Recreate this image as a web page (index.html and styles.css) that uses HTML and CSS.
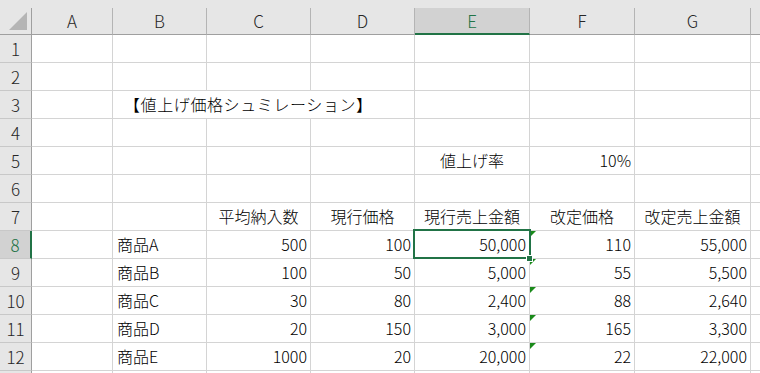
FILE: index.html
```html
<!DOCTYPE html>
<html lang="ja">
<head>
    <meta charset="UTF-8">
    <title>値上げ価格シュミレーション</title>
    <link rel="stylesheet" href="styles.css">
</head>
<body>
<div class="sheet">
    <div class="strip"></div>
    <div class="grid">
        <!-- 列見出し -->
        <div class="corner">
            <svg width="31" height="26" viewBox="0 0 31 26"><polygon points="27,4 27,22 9,22" fill="#b5b5b5"/></svg>
        </div>
        <div class="ch">A</div>
        <div class="ch">B</div>
        <div class="ch">C</div>
        <div class="ch">D</div>
        <div class="ch ch-sel">E</div>
        <div class="ch">F</div>
        <div class="ch">G</div>
        <div class="ch ch-end"></div>

        <!-- 1 -->
        <div class="rh">1</div>
        <div class="c"></div><div class="c"></div><div class="c"></div><div class="c"></div><div class="c"></div><div class="c"></div><div class="c"></div><div class="c end"></div>
        <!-- 2 -->
        <div class="rh">2</div>
        <div class="c"></div><div class="c"></div><div class="c"></div><div class="c"></div><div class="c"></div><div class="c"></div><div class="c"></div><div class="c end"></div>
        <!-- 3 -->
        <div class="rh">3</div>
        <div class="c"></div>
        <div class="c title">【値上げ価格シュミレーション】</div>
        <div class="c"></div><div class="c"></div><div class="c"></div><div class="c end"></div>
        <!-- 4 -->
        <div class="rh">4</div>
        <div class="c"></div><div class="c"></div><div class="c"></div><div class="c"></div><div class="c"></div><div class="c"></div><div class="c"></div><div class="c end"></div>
        <!-- 5 -->
        <div class="rh">5</div>
        <div class="c"></div><div class="c"></div><div class="c"></div><div class="c"></div>
        <div class="c ctr">値上げ率</div>
        <div class="c num">10%</div>
        <div class="c"></div><div class="c end"></div>
        <!-- 6 -->
        <div class="rh">6</div>
        <div class="c"></div><div class="c"></div><div class="c"></div><div class="c"></div><div class="c"></div><div class="c"></div><div class="c"></div><div class="c end"></div>
        <!-- 7 -->
        <div class="rh">7</div>
        <div class="c"></div><div class="c"></div>
        <div class="c ctr">平均納入数</div>
        <div class="c ctr">現行価格</div>
        <div class="c ctr">現行売上金額</div>
        <div class="c ctr">改定価格</div>
        <div class="c ctr">改定売上金額</div>
        <div class="c end"></div>
        <!-- 8 -->
        <div class="rh rh-sel">8</div>
        <div class="c"></div>
        <div class="c">商品A</div>
        <div class="c num">500</div>
        <div class="c num">100</div>
        <div class="c num sel">50,000<span class="handle"></span></div>
        <div class="c num flag">110</div>
        <div class="c num">55,000</div>
        <div class="c end"></div>
        <!-- 9 -->
        <div class="rh">9</div>
        <div class="c"></div>
        <div class="c">商品B</div>
        <div class="c num">100</div>
        <div class="c num">50</div>
        <div class="c num">5,000</div>
        <div class="c num flag">55</div>
        <div class="c num">5,500</div>
        <div class="c end"></div>
        <!-- 10 -->
        <div class="rh">10</div>
        <div class="c"></div>
        <div class="c">商品C</div>
        <div class="c num">30</div>
        <div class="c num">80</div>
        <div class="c num">2,400</div>
        <div class="c num flag">88</div>
        <div class="c num">2,640</div>
        <div class="c end"></div>
        <!-- 11 -->
        <div class="rh">11</div>
        <div class="c"></div>
        <div class="c">商品D</div>
        <div class="c num">20</div>
        <div class="c num">150</div>
        <div class="c num">3,000</div>
        <div class="c num flag">165</div>
        <div class="c num">3,300</div>
        <div class="c end"></div>
        <!-- 12 -->
        <div class="rh">12</div>
        <div class="c"></div>
        <div class="c">商品E</div>
        <div class="c num">1000</div>
        <div class="c num">20</div>
        <div class="c num">20,000</div>
        <div class="c num flag">22</div>
        <div class="c num">22,000</div>
        <div class="c end"></div>
        <!-- 13（下端で切れる行） -->
        <div class="rh"></div>
        <div class="c"></div><div class="c"></div><div class="c"></div><div class="c"></div><div class="c"></div><div class="c"></div><div class="c"></div><div class="c end"></div>
    </div>
</div>
</body>
</html>
```

FILE: styles.css
```css
/* シート全体 */
* {
    margin: 0;
    padding: 0;
    box-sizing: border-box;
}

body {
    font-family: "Noto Sans CJK JP", "Noto Sans", sans-serif;
    font-weight: 300;
    color: #000;
    background: #fff;
}

.sheet {
    width: 760px;
    height: 373px;
    overflow: hidden;
}

.strip {
    height: 8px;
    background: #e6e6e6;
}

.grid {
    display: grid;
    grid-template-columns: 32px 81px 94px 104px 104px 115px 105px 116px 1fr;
    grid-template-rows: 27px;
    grid-auto-rows: 28px;
}

/* 見出し */
.corner {
    background: #e6e6e6;
    border-right: 1px solid #9f9f9f;
    border-bottom: 1px solid #9f9f9f;
}

.corner svg {
    display: block;
}

.ch {
    background: #e6e6e6;
    border-right: 1px solid #b4b4b4;
    border-bottom: 1px solid #9f9f9f;
    text-align: center;
    font-size: 17px;
    line-height: 26px;
    color: #262626;
}

.ch-sel {
    background: #d2d2d2;
    color: #217346;
    border-bottom: 2px solid #217346;
}

.ch-end {
    border-right: none;
}

.rh {
    background: #e6e6e6;
    border-right: 1px solid #9f9f9f;
    border-bottom: 1px solid #c8c8c8;
    text-align: center;
    font-size: 17px;
    line-height: 27px;
    color: #262626;
}

.rh-sel {
    background: #d2d2d2;
    color: #217346;
    border-right: 2px solid #217346;
}

/* セル */
.c {
    border-right: 1px solid #d4d4d4;
    border-bottom: 1px solid #d4d4d4;
    padding: 0 4px;
    font-size: 16px;
    line-height: 26px;
    white-space: nowrap;
}

.c.end {
    border-right: none;
}

.title {
    grid-column: span 3;
    padding-left: 11px;
    letter-spacing: 0.6px;
}

.num {
    text-align: right;
    padding-right: 3px;
}

.ctr {
    text-align: center;
    padding: 0;
}

/* 選択セル */
.sel {
    position: relative;
}

.sel::after {
    content: '';
    position: absolute;
    top: -2px;
    left: -2px;
    right: -2px;
    bottom: -1px;
    border: 2px solid #217346;
    z-index: 2;
}

.handle {
    position: absolute;
    right: -4px;
    bottom: -4px;
    width: 7px;
    height: 7px;
    background: #217346;
    border: 1px solid #fff;
    z-index: 3;
}

/* エラーインジケーター */
.flag {
    position: relative;
}

.flag::before {
    content: '';
    position: absolute;
    top: 0;
    left: 0;
    border-top: 6px solid #1a8a1a;
    border-right: 6px solid transparent;
    z-index: 1;
}
```
